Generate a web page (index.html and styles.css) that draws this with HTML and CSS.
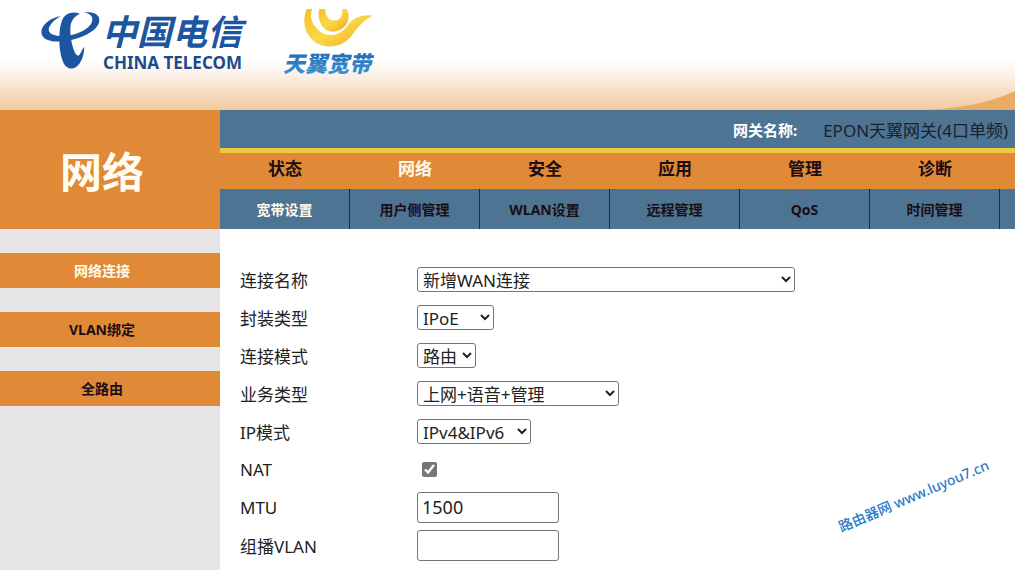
FILE: index.html
```html
<!DOCTYPE html>
<html lang="zh-CN">
<head>
<meta charset="UTF-8">
<meta name="viewport" content="width=device-width, initial-scale=1.0">
<title>EPON天翼网关</title>
<link rel="stylesheet" href="styles.css">
</head>
<body>
<header class="banner">
	<svg class="logo-telecom" viewBox="0 0 210 70" role="img" aria-label="中国电信 CHINA TELECOM">
		<g transform="translate(-10 -9) scale(0.3333)" fill="#1c55a0">
			<path d="M92 48C60 54 31 76 35 101C39 123 76 129 112 122C162 113 205 90 208 62C209 42 190 35 163 37C182 42 191 51 186 65C180 86 142 105 102 108C67 110 50 97 58 81C64 68 76 57 92 48Z"/>
			<path d="M150 42C128 32 104 40 96 62C84 90 86 150 97 180C104 202 118 209 132 204C150 198 162 172 163 141C155 147 152 166 144 167C132 164 121 120 121 90C121 65 130 50 150 42Z"/>
		</g>
		<text class="logo-cn" x="62" y="36">中国电信</text>
		<text class="logo-en" x="63" y="60">CHINA TELECOM</text>
	</svg>
	<svg class="logo-tianyi" viewBox="0 0 100 70" role="img" aria-label="天翼宽带">
		<defs>
			<linearGradient id="gold" x1="0" y1="0" x2="1" y2="1">
				<stop offset="0" stop-color="#f6bd25"/>
				<stop offset="0.5" stop-color="#fbd94a"/>
				<stop offset="1" stop-color="#eda51c"/>
			</linearGradient>
			<linearGradient id="sky" x1="0" y1="0" x2="0" y2="1">
				<stop offset="0" stop-color="#1f62b0"/>
				<stop offset="1" stop-color="#3b9ad6"/>
			</linearGradient>
		</defs>
		<g transform="translate(-20 -9) scale(0.3333)" fill="url(#gold)">
			<path d="M143 20C125 58 131 101 165 127C205 151 250 138 275 107C292 82 310 62 337 47C308 43 280 52 262 77C240 108 203 114 177 92C150 68 148 42 160 20Z"/>
			<path d="M180 20C168 52 182 91 215 95C245 95 266 75 266 50C266 38 262 28 255 20L243 20C252 38 245 59 226 61C205 63 193 45 196 20Z"/>
		</g>
		<text class="logo-sub" x="3" y="63" fill="url(#sky)">天翼宽带</text>
	</svg>
	<svg class="swoosh" viewBox="0 0 90 20" aria-hidden="true">
		<path d="M0 20C40 18 66 12 90 1V20Z" fill="#e9ab66"/>
	</svg>
</header>

<div class="layout">
	<aside class="sidebar">
		<h1 class="section-title">网络</h1>
		<nav class="side-menu">
			<a class="active" href="#">网络连接</a>
			<a href="#">VLAN绑定</a>
			<a href="#">全路由</a>
		</nav>
	</aside>

	<main class="main">
		<div class="gateway">
			<span class="gateway-label">网关名称:</span>
			<span class="gateway-name">EPON天翼网关(4口单频)</span>
		</div>
		<nav class="tabs">
			<a href="#">状态</a>
			<a class="active" href="#">网络</a>
			<a href="#">安全</a>
			<a href="#">应用</a>
			<a href="#">管理</a>
			<a href="#">诊断</a>
		</nav>
		<nav class="subtabs">
			<a class="active" href="#">宽带设置</a>
			<a href="#">用户侧管理</a>
			<a href="#">WLAN设置</a>
			<a href="#">远程管理</a>
			<a href="#">QoS</a>
			<a href="#">时间管理</a>
		</nav>

		<form class="wan-form">
			<div class="row">
				<label for="conn_name">连接名称</label>
				<select id="conn_name" class="w-name"><option>新增WAN连接</option></select>
			</div>
			<div class="row">
				<label for="encap">封装类型</label>
				<select id="encap" class="w-encap"><option>IPoE</option><option>PPPoE</option></select>
			</div>
			<div class="row">
				<label for="conn_mode">连接模式</label>
				<select id="conn_mode" class="w-mode"><option>路由</option><option>桥接</option></select>
			</div>
			<div class="row">
				<label for="service">业务类型</label>
				<select id="service" class="w-service"><option>上网+语音+管理</option></select>
			</div>
			<div class="row">
				<label for="ip_mode">IP模式</label>
				<select id="ip_mode" class="w-ip"><option>IPv4&amp;IPv6</option><option>IPv4</option><option>IPv6</option></select>
			</div>
			<div class="row">
				<label for="nat">NAT</label>
				<input id="nat" type="checkbox" checked>
			</div>
			<div class="row">
				<label for="mtu">MTU</label>
				<input id="mtu" type="text" value="1500">
			</div>
			<div class="row">
				<label for="mvlan">组播VLAN</label>
				<input id="mvlan" type="text">
			</div>
		</form>
		<p class="watermark">路由器网 www.luyou7.cn</p>
	</main>
</div>
</body>
</html>
```
FILE: styles.css
```css
* {
	box-sizing: border-box;
}
body {
	margin: 0;
	padding: 9px 9px 0 0;
	min-height: 100vh;
	display: flex;
	flex-direction: column;
	background: #fff;
	color: #222;
	font-family: "Noto Sans", "Noto Sans CJK SC", sans-serif;
	font-size: 17px;
	overflow: hidden;
}
a {
	color: #1c0d14;
	text-decoration: none;
}
a.active {
	color: #fffbe8;
}

/* banner */
.banner {
	position: relative;
	display: flex;
	gap: 30px;
	height: 101px;
	padding-left: 40px;
	background: linear-gradient(#fff 50%, #fbeee4 68%, #f5d9bd 85%, #f1cb9d);
}
.logo-telecom {
	width: 210px;
	height: 70px;
}
.logo-tianyi {
	width: 100px;
	height: 70px;
}
.logo-cn {
	font-size: 35px;
	font-weight: 700;
	font-style: italic;
	line-height: 1;
	fill: #1c55a0;
}
.logo-en {
	font-size: 17px;
	font-weight: 700;
	line-height: 1;
	fill: #1d4a8c;
}
.logo-sub {
	font-size: 22px;
	font-weight: 900;
	font-style: italic;
}
.swoosh {
	position: absolute;
	right: 0;
	bottom: 0;
	width: 90px;
	height: 20px;
}

/* columns */
.layout {
	flex: 1;
	display: grid;
	grid-template-columns: 220px 1fr;
}
.sidebar {
	background: #e6e6e6;
}
.section-title {
	display: flex;
	align-items: center;
	justify-content: center;
	height: 119px;
	margin: 0;
	padding: 4px 16px 0 0;
	background: #e08937;
	color: #fffdf2;
	font-size: 42px;
	line-height: 60px;
}
.side-menu {
	display: flex;
	flex-direction: column;
	gap: 24px;
	padding-top: 24px;
}
.side-menu a {
	height: 35px;
	padding-right: 16px;
	background: #e08937;
	font-size: 14px;
	font-weight: 700;
	line-height: 36px;
	text-align: center;
}

/* top bars */
.main {
	position: relative;
	min-width: 0;
}
.gateway {
	display: flex;
	align-items: center;
	justify-content: flex-end;
	gap: 26px;
	height: 43px;
	padding-right: 7px;
	background: #4d7493;
	border-bottom: 5px solid #ecc945;
	color: #1a1f2c;
}
.gateway-label {
	color: #fff;
	font-size: 15px;
	font-weight: 700;
}
.tabs,
.subtabs {
	display: flex;
	font-weight: 700;
	text-align: center;
}
.tabs {
	height: 36px;
	background: #e08937;
	line-height: 32px;
}
.subtabs {
	height: 40px;
	background: #4d7493;
	font-size: 14px;
	line-height: 42px;
}
.tabs a,
.subtabs a {
	flex: 0 0 130px;
}
.subtabs a {
	border-right: 1px solid #1d2a45;
}

/* settings */
.wan-form {
	padding: 31px 20px 0;
}
.row {
	display: grid;
	grid-template-columns: 177px 1fr;
	align-items: center;
	justify-items: start;
	height: 38px;
}
select,
input[type="text"] {
	max-width: 100%;
	border: 1px solid #767676;
	border-radius: 3px;
	background: #fff;
	color: #222;
	font-family: inherit;
	font-size: 17px;
}
select {
	height: 25px;
	padding: 0 2px 0 1px;
}
input[type="text"] {
	width: 142px;
	height: 31px;
	padding: 0 4px;
	font-size: 18px;
}
input[type="checkbox"] {
	width: 15px;
	height: 15px;
	margin: 0 5px;
	accent-color: #767676;
}
.w-name {
	width: 378px;
}
.w-encap {
	width: 77px;
}
.w-mode {
	width: 59px;
}
.w-service {
	width: 202px;
}
.w-ip {
	width: 114px;
}

.watermark {
	position: absolute;
	right: 20px;
	top: 374px;
	margin: 0;
	color: #2a7cc7;
	font-size: 14px;
	font-weight: 500;
	line-height: 24px;
	white-space: nowrap;
	transform: rotate(-23deg);
}
```
